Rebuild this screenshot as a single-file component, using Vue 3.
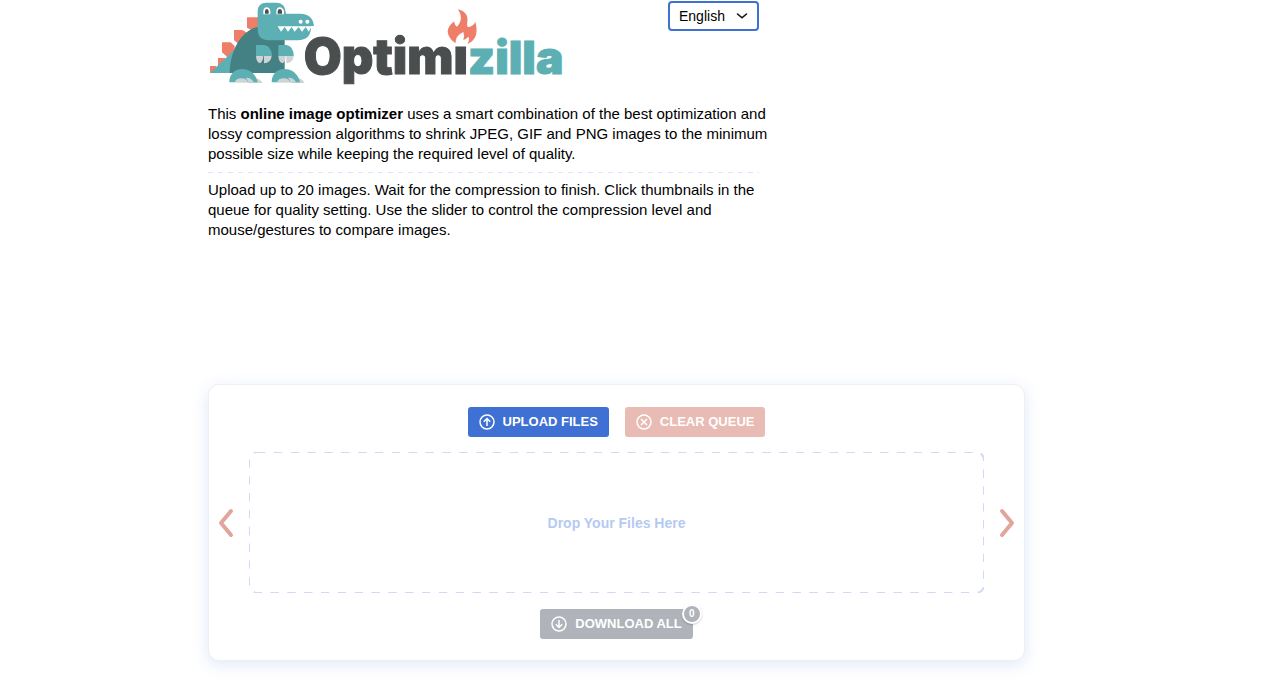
<script setup>
import { ref } from 'vue'

const language = ref('English')
const languages = ['English', 'Deutsch', 'Français', 'Español']
const downloadCount = ref(0)
</script>

<template>
  <main class="page">
    <section class="intro">
      <header class="header">
        <a class="logo" href="#">
          <svg viewBox="24 0 1062 252" role="img" aria-label="Optimizilla">
            <g fill="#ef7e69">
              <path d="M141 52H176V96L158 92L141 83Z" />
              <path d="M102 90H127L139 97V116L117 133L102 121Z" />
              <path d="M66 127H92L104 138V154L82 171L66 157Z" />
              <path d="M54 174H75V199H54Z" />
              <path d="M30 198H49V219H30Z" />
            </g>
            <path fill="#5cafb3" d="M30 219L111 142V219Z" />
            <path fill="#438184" d="M89 219C90 152 123 91 175 80L254 119V219Z" />
            <path fill="#5cafb3" d="M173 34Q173 8 200 8H232Q254 8 258 41H302Q338 42 342 78H333Q335 120 292 121H201Q173 119 173 88Z" />
            <path fill="#fff" d="M190 43V33Q191 22 200 22Q209 22 211 33V43ZM229 43V33Q230 22 239 22Q248 22 252 33V43Z" />
            <path fill="#4b4e4e" d="M195 41V34Q196 27 201 27Q206 28 206 34V41ZM233 41V34Q234 27 240 27Q246 28 246 34V41Z" />
            <circle cx="302" cy="65" r="6" fill="#fff" />
            <circle cx="322" cy="65" r="6" fill="#fff" />
            <path fill="#fff" d="M233 79H335L326 95L317 81L306 95L296 81L284 95L275 81L264 95L254 81L243 95Z" />
            <path fill="#5cafb3" d="M168 135H193Q215 139 216 168H168ZM235 135H260Q281 139 281 168H235Z" />
            <path fill="#d0d3d4" d="M168 168H190Q190 184 180 190Q169 187 168 168ZM192 168H215Q213 189 192 190ZM235 168H257Q257 184 248 190Q236 187 235 168ZM259 168H281Q279 189 259 190Z" />
            <path fill="#d0d3d4" d="M145 233Q177 230 188 249H145ZM275 233Q304 230 314 249H275Z" />
            <path fill="#5cafb3" d="M88 247C88 194 163 194 173 247ZM215 247C215 194 290 194 300 247Z" />
            <path fill="#d0d3d4" d="M104 247Q108 235 124 235Q142 236 143 247ZM137 233Q155 232 161 247H145Q142 238 137 233ZM231 247Q235 235 251 235Q269 236 270 247ZM264 233Q282 232 288 247H272Q269 238 264 233Z" />
            <text x="311" y="221" class="wordmark dark">Optimı</text>
            <text x="804" y="221" class="wordmark teal">zilla</text>
            <path fill="#ef7e69" d="M774 28C795 33 805 46 802 65Q800 75 803 81Q820 80 826 65Q833 91 827 108Q821 124 802 132Q810 119 805 110Q798 118 790 120Q794 105 790 96Q770 105 768 120Q766 125 767 130Q745 115 743 95Q744 78 763 64Q763 76 771 80C787 64 785 45 774 28Z" />
          </svg>
        </a>
        <div class="language">
          <select v-model="language" aria-label="Language">
            <option v-for="name in languages" :key="name">{{ name }}</option>
          </select>
          <svg class="chevron" viewBox="0 0 12 8" aria-hidden="true"><path d="M1.5 2L6 5.8L10.5 2" /></svg>
        </div>
      </header>
      <p>This <strong>online image optimizer</strong> uses a smart combination of the best optimization and lossy compression algorithms to shrink JPEG, GIF and PNG images to the minimum possible size while keeping the required level of quality.</p>
      <div class="divider"></div>
      <p>Upload up to 20 images. Wait for the compression to finish. Click thumbnails in the queue for quality setting. Use the slider to control the compression level and mouse/gestures to compare images.</p>
    </section>

    <section class="panel">
      <div class="actions">
        <button class="btn upload" type="button">
          <svg viewBox="0 0 16 16" aria-hidden="true"><circle cx="8" cy="8" r="7" /><path d="M8 12V4.5M4.8 7.7L8 4.5L11.2 7.7" /></svg>
          UPLOAD FILES
        </button>
        <button class="btn clear" type="button" disabled>
          <svg viewBox="0 0 16 16" aria-hidden="true"><circle cx="8" cy="8" r="7" /><path d="M5 5L11 11M11 5L5 11" /></svg>
          CLEAR QUEUE
        </button>
      </div>
      <div class="queue">
        <button class="arrow" type="button" aria-label="Previous" disabled>
          <svg viewBox="0 0 16 30"><path d="M13 3L3 15L13 27" /></svg>
        </button>
        <div class="drop">
          <svg class="outline" aria-hidden="true"><rect width="100%" height="100%" rx="8" /></svg>
          Drop Your Files Here
        </div>
        <button class="arrow" type="button" aria-label="Next" disabled>
          <svg viewBox="0 0 16 30"><path d="M3 3L13 15L3 27" /></svg>
        </button>
      </div>
      <div class="actions">
        <button class="btn download" type="button" disabled>
          <svg viewBox="0 0 16 16" aria-hidden="true"><circle cx="8" cy="8" r="7" /><path d="M8 4V11.5M4.8 8.3L8 11.5L11.2 8.3" /></svg>
          DOWNLOAD ALL
          <span class="badge">{{ downloadCount }}</span>
        </button>
      </div>
    </section>
  </main>
</template>

<style>
body {
  background: #fff;
}
</style>

<style scoped>
.page {
  box-sizing: border-box;
  max-width: 864px;
  margin: 0 auto;
  padding-right: 47px;
  padding-bottom: 36px;
  color: #000;
  font: 15px/20px "Liberation Sans", Arial, sans-serif;
}
.intro {
  max-width: 566px;
  min-height: 384px;
}
.header {
  display: flex;
  justify-content: space-between;
  align-items: flex-start;
  margin-right: 15px;
  margin-bottom: 20px;
}
.logo svg {
  display: block;
  width: 354px;
  height: 84px;
  overflow: visible;
}
.wordmark {
  font: 900 147px Inter, sans-serif;
}
.dark {
  fill: #4b4e4e;
  stroke: #4b4e4e;
  stroke-width: 3;
}
.teal {
  font-size: 138px;
  fill: #5cafb3;
  stroke: #5cafb3;
  stroke-width: 3;
}
.language {
  position: relative;
  margin-top: 1px;
}
.language select {
  appearance: none;
  box-sizing: border-box;
  display: block;
  width: 91px;
  height: 30px;
  padding: 0 24px 0 9px;
  border: 2px solid #3f70d4;
  border-radius: 4px;
  background: #fff;
  color: #000;
  font: 14px/20px "Liberation Sans", Arial, sans-serif;
}
.chevron {
  position: absolute;
  top: 11px;
  right: 11px;
  width: 12px;
  height: 8px;
  fill: none;
  stroke: #111;
  stroke-width: 1.6;
  stroke-linecap: round;
  pointer-events: none;
}
p {
  margin: 0;
}
.divider {
  height: 1px;
  margin: 8px 15px 7px 0;
  background: repeating-linear-gradient(90deg, #d9e2f9 0 5px, transparent 5px 10px);
}
.panel {
  box-sizing: border-box;
  padding: 22px 9px 21px;
  border: 1px solid #eceff4;
  border-radius: 11px;
  background: #fff;
  box-shadow: 0 4px 16px rgba(63, 112, 212, 0.16);
}
.actions {
  display: flex;
  justify-content: center;
  gap: 16px;
}
.btn {
  position: relative;
  display: flex;
  align-items: center;
  gap: 8px;
  height: 30px;
  padding: 0 11px;
  border: 0;
  border-radius: 3px;
  color: #fff;
  font: bold 13px/20px "Liberation Sans", Arial, sans-serif;
}
.btn svg {
  width: 16px;
  height: 16px;
  fill: none;
  stroke: currentColor;
  stroke-width: 1.5;
}
.upload {
  background: #3f70d4;
}
.clear {
  background: #e8bbb5;
}
.download {
  background: #b0b3b9;
}
.badge {
  position: absolute;
  top: -5px;
  right: -9px;
  box-sizing: border-box;
  width: 20px;
  height: 20px;
  border: 2px solid #fff;
  border-radius: 50%;
  background: #b0b3b9;
  box-shadow: 0 1px 2px rgba(0, 0, 0, 0.2);
  font-size: 10px;
  line-height: 16px;
  text-align: center;
}
.queue {
  display: flex;
  align-items: center;
  gap: 15px;
  margin: 15px 0 16px;
}
.arrow {
  flex: none;
  width: 16px;
  height: 30px;
  padding: 0;
  border: 0;
  background: none;
}
.arrow svg {
  display: block;
  width: 16px;
  height: 30px;
  fill: none;
  stroke: #e2a59c;
  stroke-width: 4;
  stroke-linecap: round;
  stroke-linejoin: round;
}
.drop {
  position: relative;
  flex: 1;
  display: flex;
  align-items: center;
  justify-content: center;
  height: 141px;
  color: #b5caf2;
  font-size: 14px;
  font-weight: bold;
}
.outline {
  position: absolute;
  inset: 0;
  width: 100%;
  height: 100%;
}
.outline rect {
  fill: none;
  stroke: #cfdbf6;
  stroke-width: 2;
  stroke-dasharray: 8.42 8.42;
}
</style>
